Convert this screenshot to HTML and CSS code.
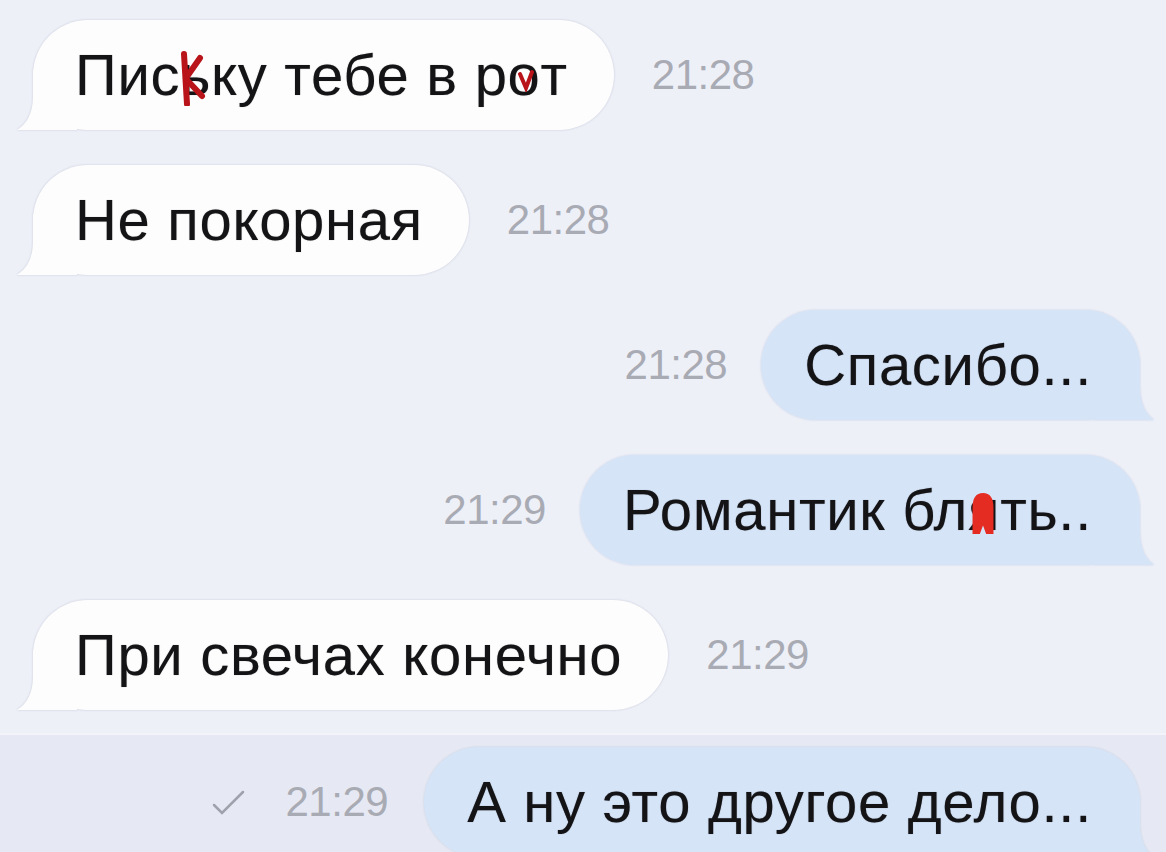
FILE: index.html
```html
<!DOCTYPE html>
<html lang="ru">
<head>
    <meta charset="UTF-8">
    <meta name="viewport" content="width=device-width, initial-scale=1.0">
    <title>Чат</title>
    <link rel="stylesheet" href="styles.css">
</head>
<body>

    <div class="chat">
        <!-- incoming -->
        <div class="row row-in">
            <div class="bubble bubble-in">Пис<span class="ink">ь<svg class="scribble" viewBox="0 0 30 56"><path d="M6 4 L9 54" /><path d="M8 28 L22 8" /><path d="M9 30 L24 46" /></svg></span>ку тебе в р<span class="ink">о<svg class="scribble scribble-v" viewBox="0 0 20 24"><path d="M4 6 L10 20 L16 4" /></svg></span>т</div>
            <span class="time">21:28</span>
        </div>

        <div class="row row-in">
            <div class="bubble bubble-in">Не покорная</div>
            <span class="time">21:28</span>
        </div>

        <!-- outgoing -->
        <div class="row row-out">
            <span class="time">21:28</span>
            <div class="bubble bubble-out">Спасибо...</div>
        </div>

        <div class="row row-out">
            <span class="time">21:29</span>
            <div class="bubble bubble-out">Романтик бл<span class="ink">я<svg class="blob" viewBox="0 0 24 42"><path d="M2 41 L2 16 Q2 2 12 2 Q22 2 22 16 L22 41 L15 41 L12 33 L9 41 Z" /></svg></span>ть..</div>
        </div>

        <div class="row row-in">
            <div class="bubble bubble-in">При свечах конечно</div>
            <span class="time">21:29</span>
        </div>

        <!-- last message, selected -->
        <div class="last-band">
            <div class="row row-out">
                <svg class="check" viewBox="0 0 40 30"><path d="M6 18 L14 26 L35 5" /></svg>
                <span class="time">21:29</span>
                <div class="bubble bubble-out">А ну это другое дело...</div>
            </div>
        </div>
    </div>

</body>
</html>
```

FILE: styles.css
```css
/* Page */
body {
    margin: 0;
    height: 852px;
    overflow: hidden;
    background: #eef0f8;
    font-family: 'Liberation Sans', Arial, sans-serif;
    color: #141416;
}

.chat {
    display: flex;
    flex-direction: column;
    gap: 35px;
    padding-top: 20px;
    height: 832px;
    overflow: hidden;
}

/* Rows */
.row {
    display: flex;
    align-items: center;
    gap: 38px;
}

.row-in {
    justify-content: flex-start;
    padding-left: 33px;
}

.row-out {
    justify-content: flex-end;
    padding-right: 26px;
    gap: 34px;
}

/* Bubbles */
.bubble {
    position: relative;
    height: 110px;
    line-height: 110px;
    padding: 0 46px 0 42px;
    border-radius: 55px;
    font-size: 58px;
    letter-spacing: 0.7px;
    white-space: nowrap;
    text-shadow: 0 0 1px rgba(0, 0, 0, 0.4);
}

.bubble-in {
    background: #fdfdfe;
    filter: drop-shadow(0 0 1px rgba(150, 155, 175, 0.45));
}

.bubble-out {
    background: #d6e4f8;
    padding: 0 48px 0 43px;
    filter: drop-shadow(0 0 1px rgba(140, 160, 190, 0.35));
}

/* Tails */
.bubble-in::before,
.bubble-out::before {
    content: "";
    position: absolute;
    bottom: 0;
    width: 60px;
    height: 60px;
}

.bubble-in::before {
    left: -16px;
    background: #fdfdfe;
    clip-path: path("M16 0 L16 26 Q16 50 0 60 L60 60 L60 0 Z");
}

.bubble-out::before {
    right: -14px;
    background: #d6e4f8;
    clip-path: path("M46 0 L46 26 Q46 50 60 60 L0 60 L0 0 Z");
}

/* Time stamps */
.time {
    font-size: 42px;
    letter-spacing: -0.5px;
    color: #a9abb4;
    white-space: nowrap;
}

/* Red marker edits */
.ink {
    position: relative;
    display: inline-block;
    line-height: 1;
}

.scribble {
    position: absolute;
    left: -2px;
    top: 4px;
    width: 30px;
    height: 56px;
    fill: none;
    stroke: #b8141a;
    stroke-width: 6;
    stroke-linecap: round;
}

.scribble-v {
    left: 8px;
    top: 22px;
    width: 20px;
    height: 24px;
    stroke-width: 4;
}

.blob {
    position: absolute;
    left: 2px;
    top: 10px;
    width: 26px;
    height: 44px;
    fill: #e52c23;
}

/* Selected last message */
.last-band {
    margin-top: -12px;
    padding-top: 12px;
    flex: 1;
    background: #e6e9f3;
    border-top: 2px solid #f2f4fa;
}

.last-band .row-out {
    gap: 36px;
}

.check {
    width: 40px;
    height: 30px;
    margin-right: 2px;
    fill: none;
    stroke: #9fa2ab;
    stroke-width: 2.5;
    stroke-linecap: round;
}
```
